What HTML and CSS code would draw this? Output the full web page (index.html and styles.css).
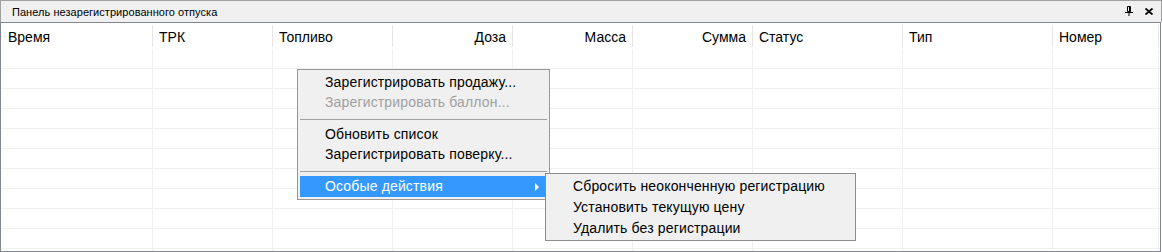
FILE: index.html
```html
<!DOCTYPE html>
<html lang="ru">
<head>
    <meta charset="UTF-8">
    <title>Панель незарегистрированного отпуска</title>
    <link rel="stylesheet" href="styles.css">
</head>
<body>

<div class="panel">
    <div class="titlebar">
        <span class="title">Панель незарегистрированного отпуска</span>
        <div class="tools">
            <svg class="pin" width="8" height="10" viewBox="0 0 8 10">
                <path d="M2.5 0.5h3v5h-3z M0 6.5h8 M4 6.5v3.5" fill="none" stroke="#000" stroke-width="1"/>
                <path d="M4.5 1v4.5" stroke="#000" stroke-width="1"/>
            </svg>
            <svg class="close" width="8" height="7" viewBox="0 0 8 7">
                <path d="M0.5 0.5l7 6 M7.5 0.5l-7 6" stroke="#000" stroke-width="1.8"/>
            </svg>
        </div>
    </div>

    <div class="grid">
        <div class="row head">
            <div class="cell">Время</div>
            <div class="cell">ТРК</div>
            <div class="cell">Топливо</div>
            <div class="cell num">Доза</div>
            <div class="cell num">Масса</div>
            <div class="cell num">Сумма</div>
            <div class="cell">Статус</div>
            <div class="cell">Тип</div>
            <div class="cell">Номер</div>
        </div>
        <div class="row"><div class="cell"></div><div class="cell"></div><div class="cell"></div><div class="cell"></div><div class="cell"></div><div class="cell"></div><div class="cell"></div><div class="cell"></div><div class="cell"></div></div>
        <div class="row"><div class="cell"></div><div class="cell"></div><div class="cell"></div><div class="cell"></div><div class="cell"></div><div class="cell"></div><div class="cell"></div><div class="cell"></div><div class="cell"></div></div>
        <div class="row"><div class="cell"></div><div class="cell"></div><div class="cell"></div><div class="cell"></div><div class="cell"></div><div class="cell"></div><div class="cell"></div><div class="cell"></div><div class="cell"></div></div>
        <div class="row"><div class="cell"></div><div class="cell"></div><div class="cell"></div><div class="cell"></div><div class="cell"></div><div class="cell"></div><div class="cell"></div><div class="cell"></div><div class="cell"></div></div>
        <div class="row"><div class="cell"></div><div class="cell"></div><div class="cell"></div><div class="cell"></div><div class="cell"></div><div class="cell"></div><div class="cell"></div><div class="cell"></div><div class="cell"></div></div>
        <div class="row"><div class="cell"></div><div class="cell"></div><div class="cell"></div><div class="cell"></div><div class="cell"></div><div class="cell"></div><div class="cell"></div><div class="cell"></div><div class="cell"></div></div>
        <div class="row"><div class="cell"></div><div class="cell"></div><div class="cell"></div><div class="cell"></div><div class="cell"></div><div class="cell"></div><div class="cell"></div><div class="cell"></div><div class="cell"></div></div>
        <div class="row"><div class="cell"></div><div class="cell"></div><div class="cell"></div><div class="cell"></div><div class="cell"></div><div class="cell"></div><div class="cell"></div><div class="cell"></div><div class="cell"></div></div>
        <div class="row"><div class="cell"></div><div class="cell"></div><div class="cell"></div><div class="cell"></div><div class="cell"></div><div class="cell"></div><div class="cell"></div><div class="cell"></div><div class="cell"></div></div>
        <div class="row"><div class="cell"></div><div class="cell"></div><div class="cell"></div><div class="cell"></div><div class="cell"></div><div class="cell"></div><div class="cell"></div><div class="cell"></div><div class="cell"></div></div>
        <div class="row"><div class="cell"></div><div class="cell"></div><div class="cell"></div><div class="cell"></div><div class="cell"></div><div class="cell"></div><div class="cell"></div><div class="cell"></div><div class="cell"></div></div>
    </div>

    <!-- context menu -->
    <div class="menu main-menu">
        <div class="item">Зарегистрировать продажу...</div>
        <div class="item disabled">Зарегистрировать баллон...</div>
        <div class="separator"></div>
        <div class="item">Обновить список</div>
        <div class="item">Зарегистрировать поверку...</div>
        <div class="separator"></div>
        <div class="item active">Особые действия<span class="arrow"></span></div>
    </div>

    <div class="menu sub-menu">
        <div class="item">Сбросить неоконченную регистрацию</div>
        <div class="item">Установить текущую цену</div>
        <div class="item">Удалить без регистрации</div>
    </div>
</div>

</body>
</html>
```

FILE: styles.css
```css
body {
    margin: 0;
    font-family: 'Liberation Sans', Arial, sans-serif;
    background: #ffffff;
    color: #000;
}

.panel {
    position: relative;
    width: 1162px;
    height: 252px;
    overflow: hidden;
}

.titlebar {
    display: flex;
    align-items: center;
    justify-content: space-between;
    height: 21px;
    background: #f0f0f0;
    border: 1px solid #a0a0a0;
    border-bottom: none;
    box-sizing: content-box;
}

.title {
    font-size: 11px;
    padding-left: 11px;
    letter-spacing: 0.05px;
}

.tools {
    display: flex;
    align-items: center;
    gap: 12px;
    padding-right: 8px;
}

.pin {
    margin-top: -2px;
}

.grid {
    width: 1159px;
    height: 228px;
    border: 1px solid #828790;
    overflow: hidden;
}

.row {
    display: grid;
    grid-template-columns: 152px 120px 120px 120px 120px 120px 150px 150px 106px;
    height: 20px;
    box-sizing: border-box;
    border-bottom: 1px solid #f0f0f0;
}

.cell {
    border-right: 1px solid #f0f0f0;
}

.head {
    height: 26px;
    border-bottom: 1px solid #ffffff;
    font-size: 14px;
}

.head .cell {
    display: flex;
    align-items: center;
    padding: 2px 6px 0;
    margin: 2px 0 1px;
    border-right-color: #e5e5e5;
}

.head .cell:first-child {
    padding-left: 7px;
}

.head .num {
    justify-content: flex-end;
}

/* menus */
.menu {
    position: absolute;
    background: #f0f0f0;
    border: 1px solid #979797;
    padding: 2px;
    font-size: 14px;
    letter-spacing: 0.15px;
    box-sizing: border-box;
}

.main-menu {
    left: 297px;
    top: 69px;
    width: 253px;
}

.sub-menu {
    left: 545px;
    top: 173px;
    width: 311px;
    padding: 2px 2px 1px;
    border-color: #8c8c8c;
}

.item {
    position: relative;
    height: 20px;
    line-height: 21px;
    padding-left: 25px;
    white-space: nowrap;
}

.sub-menu .item {
    height: 21px;
    line-height: 21px;
}

.item.disabled {
    color: #a0a0a0;
}

.item.active {
    background: #3399ff;
    color: #fff;
    margin-right: -2px;
    height: 21px;
    line-height: 21px;
}

.arrow {
    position: absolute;
    right: 10px;
    top: 7px;
    border-left: 4px solid #fff;
    border-top: 4px solid transparent;
    border-bottom: 4px solid transparent;
}

.separator {
    margin: 7px 0 4px;
    border-top: 1px solid #a0a0a0;
}
```
